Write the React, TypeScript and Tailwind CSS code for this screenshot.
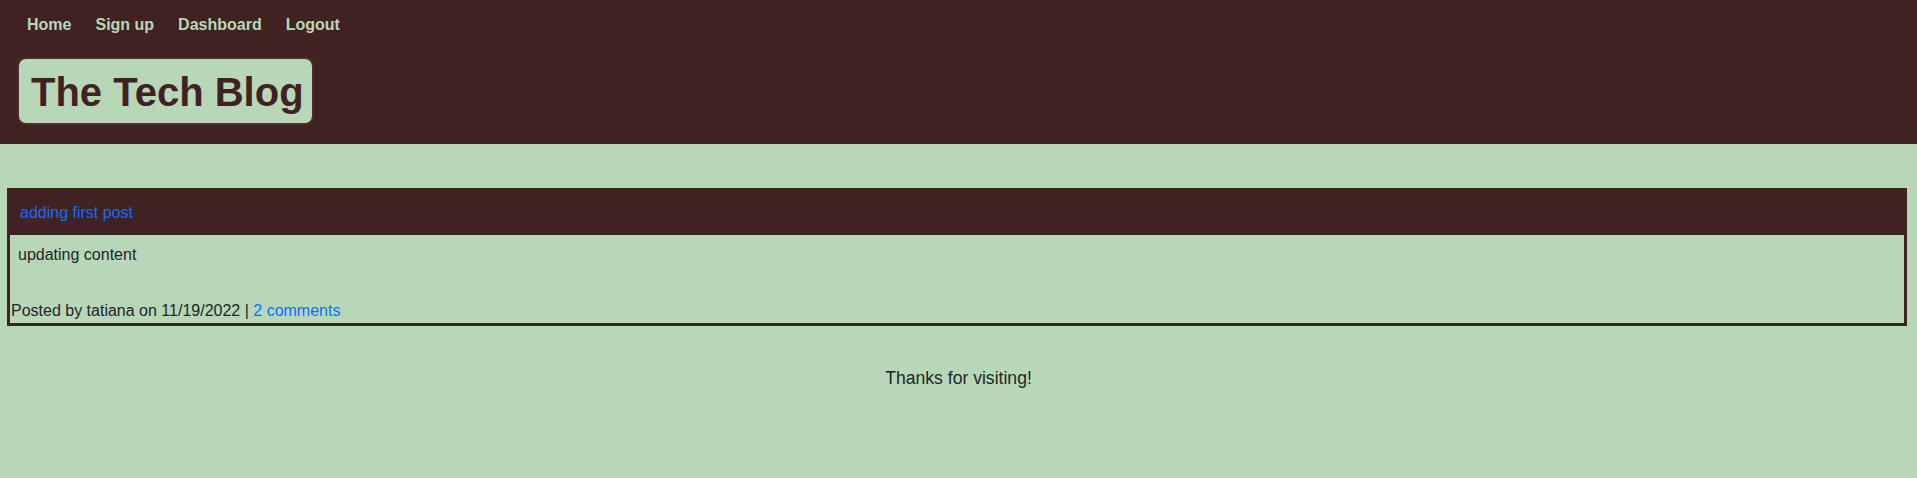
const navLinks = ["Home", "Sign up", "Dashboard", "Logout"];

const PostCard = () => (
  <section className="ml-[7px] mr-[10px] border-[3px] border-[#412222]">
    <header className="bg-[#412222] pl-[10px] pt-[9.5px] pb-[10.5px]">
      <a href="#" className="text-[16px] leading-[24px] text-[#0d6efd]">
        adding first post
      </a>
    </header>
    <div className="pt-[7.5px]">
      <p className="pl-[8px] text-[16px] leading-[24px] text-[#212529]">updating content</p>
      <p className="mt-[32px] pl-[1px] text-[16px] leading-[24px] text-[#212529]">
        Posted by tatiana on 11/19/2022 |{" "}
        <a href="#" className="text-[#0d6efd]">
          2 comments
        </a>
      </p>
    </div>
  </section>
);

export default function App() {
  return (
    <div className="min-h-screen bg-[#b8d7b8] font-['Liberation_Sans',Arial,sans-serif]">
      <header className="h-[144px] bg-[#412222]">
        <nav className="flex gap-[24px] pl-[27px] pt-[13px]">
          {navLinks.map((l) => (
            <a key={l} href="#" className="text-[16px] font-bold leading-[24px] text-[#b8d7b8]">
              {l}
            </a>
          ))}
        </nav>
        <div className="ml-[17px] mt-[20px] inline-flex h-[68px] items-center rounded-[9px] border-2 border-[#4e2d2d] bg-[#b8d7b8] pl-[12px] pr-[8px] pt-[1px]">
          <h1 className="text-[40px] font-bold leading-[48px] text-[#412222]">The Tech Blog</h1>
        </div>
      </header>
      <main className="pt-[44px]">
        <PostCard />
      </main>
      <footer className="mt-[39.5px] text-center text-[17.6px] leading-[26.4px] text-[#212529]">
        Thanks for visiting!
      </footer>
    </div>
  );
}
